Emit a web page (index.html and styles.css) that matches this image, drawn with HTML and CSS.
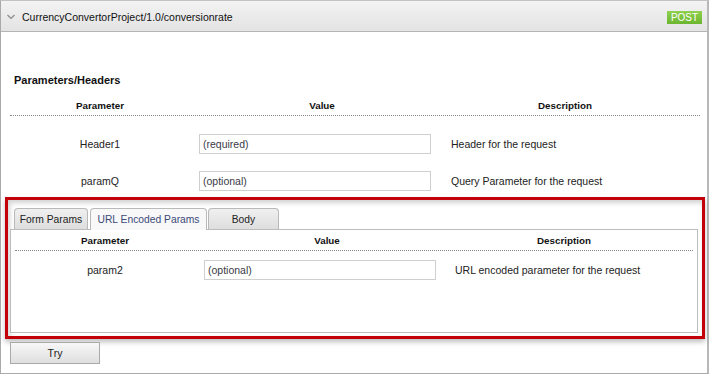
FILE: index.html
```html
<!DOCTYPE html>
<html lang="en">
  <head>
    <meta charset="UTF-8" />
    <meta name="viewport" content="width=device-width, initial-scale=1.0" />
    <title>conversionrate</title>
    <link rel="stylesheet" href="styles.css">
  </head>
  <body>
    <div class="panel">
      <div class="panel-head">
        <svg class="chevron" width="8" height="6" viewBox="0 0 8 6">
          <polyline points="0.5,1 4,4.5 7.5,1" fill="none" stroke="#8a8a8a" stroke-width="1.2" />
        </svg>
        <span class="path">CurrencyConvertorProject/1.0/conversionrate</span>
        <span class="method">POST</span>
      </div>

      <h4 class="section-title">Parameters/Headers</h4>
      <div class="ptable outer">
        <div class="prow head">
          <div class="cell">Parameter</div>
          <div class="cell value">Value</div>
          <div class="cell desc">Description</div>
        </div>
        <div class="prow first">
          <div class="cell name">Header1</div>
          <div class="cell"><input class="field" type="text" placeholder="(required)"></div>
          <div class="cell text">Header for the request</div>
        </div>
        <div class="prow">
          <div class="cell name">paramQ</div>
          <div class="cell"><input class="field" type="text" placeholder="(optional)"></div>
          <div class="cell text">Query Parameter for the request</div>
        </div>
      </div>

      <div class="highlight">
        <div class="tabs">
          <button class="tab">Form Params</button>
          <button class="tab active">URL Encoded Params</button>
          <button class="tab body-tab">Body</button>
        </div>
        <div class="tab-panel">
          <div class="ptable inner">
            <div class="prow head">
              <div class="cell">Parameter</div>
              <div class="cell value">Value</div>
              <div class="cell desc">Description</div>
            </div>
            <div class="prow first">
              <div class="cell name">param2</div>
              <div class="cell"><input class="field" type="text" placeholder="(optional)"></div>
              <div class="cell text">URL encoded parameter for the request</div>
            </div>
          </div>
        </div>
      </div>

      <button class="try-btn">Try</button>
    </div>
  </body>
</html>
```

FILE: styles.css
```css
* {
  margin: 0;
  padding: 0;
  box-sizing: border-box;
}

body {
  background-color: #fff;
  font-family: "Liberation Sans", Arial, sans-serif;
  color: #222;
}

.panel {
  width: 709px;
  height: 374px;
  border: 1px solid #aaa;
  border-top-color: #c4c4c4;
  border-right-width: 2px;
  border-right-color: #b8b8b8;
}

.panel-head {
  height: 31px;
  display: flex;
  align-items: center;
  padding: 0 5px 0 6px;
  background: linear-gradient(#f3f3f3, #e3e3e3);
  border-bottom: 1px solid #b5b5b5;
}

.chevron {
  margin-top: 1px;
  margin-right: 7px;
}

.path {
  font-size: 10.5px;
  color: #111;
  padding-top: 1px;
}

.method {
  margin-left: auto;
  margin-top: 2px;
  height: 13px;
  width: 35px;
  background: linear-gradient(#8fd14f, #6cb52f);
  color: #fff;
  font-size: 10px;
  line-height: 13px;
  text-align: center;
}

.section-title {
  font-size: 11px;
  font-weight: bold;
  line-height: 14px;
  margin: 41px 0 0 13px;
  color: #111;
}

.ptable.outer {
  margin: 8px 0 0 9px;
  width: 690px;
}

.prow {
  display: grid;
  grid-template-columns: 180px 250px 1fr;
  align-items: center;
}

.prow.head {
  height: 21px;
  border-bottom: 1px dotted #888;
  font-size: 9.8px;
  font-weight: bold;
  color: #111;
}

.prow.head .cell {
  text-align: center;
  padding-left: 0;
}

.prow.head .value {
  padding-left: 14px;
}

.prow.head .desc {
  padding-right: 10px;
}

.prow + .prow {
  margin-top: 17px;
}

.prow.first {
  margin-top: 18px;
}

.cell {
  padding-left: 9px;
}

.cell.name {
  font-size: 10.5px;
  text-align: center;
  padding-left: 0;
}

.cell.text {
  font-size: 10.5px;
  padding-left: 11px;
  color: #222;
}

.field {
  display: block;
  width: 232px;
  height: 20px;
  border: 1px solid #cfcfcf;
  padding: 0 3px;
  font-family: "Liberation Sans", Arial, sans-serif;
  font-size: 10.5px;
  color: #333;
  outline: none;
}

.field::placeholder {
  color: #3a3a48;
}

.highlight {
  margin: 6px 0 0 4px;
  width: 700px;
  height: 142px;
  border: 3px solid #c4000a;
  padding: 8px 0 0 2px;
  box-shadow: 0 3px 5px rgba(0, 0, 0, 0.25), inset 2px 3px 5px rgba(0, 0, 0, 0.18);
}

.tabs {
  display: flex;
  padding-left: 4px;
  gap: 2px;
  height: 21px;
}

.tab {
  height: 21px;
  border: 1px solid #b9b9b9;
  border-bottom: none;
  border-radius: 4px 4px 0 0;
  background: linear-gradient(#f0f0f0, #dedede);
  font-family: "Liberation Sans", Arial, sans-serif;
  font-size: 10.3px;
  color: #222;
  white-space: nowrap;
  width: 74px;
}

.tab.active {
  width: 117px;
  background: #f8f8f8;
  color: #3b4a78;
  height: 22px;
  position: relative;
  z-index: 1;
}

.body-tab {
  width: 71px;
  margin-left: -1px;
}

.tab-panel {
  width: 688px;
  height: 104px;
  border: 1px solid #bcbcbc;
  background-color: #fff;
  padding: 1px 0 0 4px;
}

.ptable.inner {
  width: 678px;
}

.ptable.inner .prow.head {
  height: 20px;
}

.ptable.inner .prow.first {
  margin-top: 9px;
}

.ptable.inner .cell.text {
  padding-left: 10px;
}

.try-btn {
  display: block;
  margin: 3px 0 0 9px;
  width: 90px;
  height: 22px;
  border: 1px solid #a9a9a9;
  background: linear-gradient(#f7f7f7, #dfdfdf);
  font-family: "Liberation Sans", Arial, sans-serif;
  font-size: 10.5px;
  color: #222;
}
```
